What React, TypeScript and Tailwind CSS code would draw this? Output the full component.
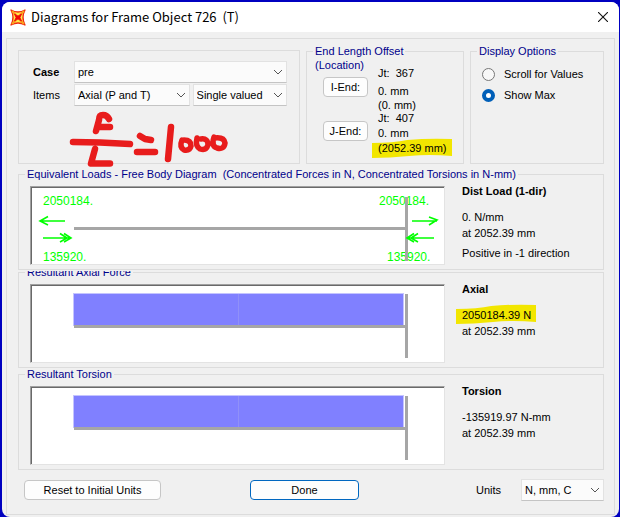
import type { ReactNode } from "react";

function Chevron() {
  return (
    <svg className="pointer-events-none absolute top-1/2 right-1 h-2 w-2.5 -translate-y-1/2" viewBox="0 0 10 8" fill="none" stroke="#555" strokeWidth="1">
      <path d="M1 2l4 4 4-4" />
    </svg>
  );
}

function Select({ id, label, options, className }: { id: string; label?: string; options: string[]; className: string }) {
  return (
    <div className={`relative h-[22px] ${className}`}>
      <select id={id} aria-label={label} className="h-full w-full appearance-none border border-[#e2e2e2] border-b-[#c4c4c4] bg-[#fbfbfb] pr-4 pl-[3px] leading-4 outline-none">
        {options.map((o) => (
          <option key={o}>{o}</option>
        ))}
      </select>
      <Chevron />
    </div>
  );
}

function Group({ title, className, legendClass = "", children }: { title: string; className: string; legendClass?: string; children: ReactNode }) {
  return (
    <fieldset className={`min-w-0 border border-[#dcdcdc] ${className}`}>
      <legend className={`px-0.5 leading-[14px] whitespace-pre text-[#00008b] ${legendClass}`}>{title}</legend>
      {children}
    </fieldset>
  );
}

function Canvas({ label, children }: { label: string; children: ReactNode }) {
  return (
    <div className="h-[79px] min-w-0 flex-1 border border-[#e3e3e3] border-t-[#a0a0a0] border-l-[#a0a0a0] bg-white">
      <svg role="img" aria-label={label} className="h-full w-full border-t border-l border-[#696969]" viewBox="0 0 412 76" preserveAspectRatio="xMinYMin meet">
        {children}
      </svg>
    </div>
  );
}

function Readings({ children }: { children: ReactNode }) {
  return <div className="-mt-[3px] w-[125px] shrink-0 leading-4">{children}</div>;
}

function Highlight({ children }: { children: ReactNode }) {
  return (
    <span className="relative inline-block">
      <svg className="absolute -top-[3px] -left-[6px] h-[20px] w-[80px]" viewBox="0 0 82 20" preserveAspectRatio="none">
        <path d="M0 5Q22 5 36 2Q58 0 82 1V18Q58 16 38 18Q18 20 0 20Z" fill="#f2e600" />
      </svg>
      <span className="relative">{children}</span>
    </span>
  );
}

function ForceDiagram({ label }: { label: string }) {
  return (
    <Canvas label={label}>
      <rect x="41" y="7" width="331" height="33" fill="#c4c4ff" />
      <rect x="42" y="8" width="329" height="32" fill="#8080ff" />
      <path d="M206.500 8v32" stroke="#9090f8" />
      <path d="M42 40.500h332" stroke="#a6a6a6" strokeWidth="3" />
      <path d="M374.500 8v64" stroke="#a6a6a6" strokeWidth="3" />
    </Canvas>
  );
}

function LoadDiagram() {
  return (
    <Canvas label="Free body diagram">
      <g fill="#00ff00" fontSize="12" className="font-['Liberation_Sans',Arial,sans-serif]">
        <text x="11" y="17">2050184.</text>
        <text x="11" y="73">135920.</text>
        <text x="347" y="17">2050184.</text>
        <text x="355" y="73">135920.</text>
      </g>
      <path d="M42 40.500h332" stroke="#a6a6a6" strokeWidth="3" />
      <path d="M374.500 9v64" stroke="#a6a6a6" strokeWidth="3" />
      <g fill="none" stroke="#00ff00" strokeWidth="1.600">
        <path d="M33 33H8M16 28.500l-8 4.500 8 4M11 50h28M28 45.500l7 4.500-7 4M32 45.500l7 4.500-7 4" />
        <path d="M380 33h25M397 29l8 3-8 5M402 50h-26M386 45.500l-7 4.500 7 4M382 45.500l-7 4.500 7 4" />
      </g>
    </Canvas>
  );
}

function AppIcon() {
  return (
    <svg className="h-[17px] w-4" viewBox="0 0 16 17">
      <path d="M1 1Q8 5 15 1Q11 8.500 15 16Q8 12 1 16Q5 8.500 1 1Z" fill="#ffe94a" stroke="#f02a12" strokeWidth="1.300" strokeLinejoin="round" />
      <path d="M2 2l4 4M14 2l-4 4M2 15l4-4M14 15l-4-4" stroke="#f9a01c" strokeWidth="2" />
      <path d="M4.500 5L8 7l3.500-2L10 8.500l1.500 3.500L8 10l-3.500 2L6 8.500Z" fill="#f00808" stroke="#f00808" strokeWidth="0.800" />
    </svg>
  );
}

function Handwriting() {
  return (
    <svg className="pointer-events-none absolute top-[60px] left-[50px] h-[56px] w-[162px]" viewBox="69 111 162 56" fill="none" stroke="#e81c1c" strokeWidth="6.500" strokeLinecap="round" strokeLinejoin="round">
      <path d="M109 119Q107 115 103 115Q99 115 99 120L96 131M98 127H110M73 142L100 142.500L130 144M95 149L91 163.500H110M140 136L145 139L151 140M137 152H155M171 127L168 159" />
      <path strokeWidth="5.500" d="M182 140Q179 147 184 150Q190 151 191 146Q191 140 184 140M197 138Q195 146 200 149Q206 151 208 145Q208 138 201 139M214 137Q211 146 217 148Q224 150 225 143Q224 137 215 138" />
    </svg>
  );
}

const button = "h-5 rounded-[4px] border border-[#c6c6c6] bg-[#fdfdfd] leading-4";

export default function App() {
  return (
    <div className="min-h-screen bg-[#0000c0] pt-0.5 pr-px pl-0.5 font-['Liberation_Sans',Arial,sans-serif] text-[11px] text-black">
      <main className="flex min-h-[515px] flex-col overflow-hidden rounded-lg bg-[#f0f0f0]">
        <header className="flex h-[30px] items-center bg-white px-2">
          <AppIcon />
          <h1 className="ml-[5px] flex-1 font-['Noto_Sans_CJK_SC','Noto_Sans',sans-serif] text-[13px] leading-5 whitespace-pre">Diagrams for Frame Object 726  (T)</h1>
          <button aria-label="Close" className="p-[3px]">
            <svg className="size-[10px]" viewBox="0 0 10 10" stroke="#111" strokeWidth="1.100">
              <path d="M0 0l10 10M10 0L0 10" />
            </svg>
          </button>
        </header>

        <div className="mx-1 mt-1.5 mb-[2px] flex-1 border border-[#dcdcdc] pr-[10px] pl-[11px]">
          <div className="mt-[5px] flex h-[120px] gap-1.5">
            <section className="relative mt-1.5 flex-1 border border-[#dcdcdc] pt-[10px] pr-3 pl-[14px]">
              <div className="flex items-center">
                <label htmlFor="case" className="w-[41px] font-bold">Case</label>
                <Select id="case" options={["pre"]} className="flex-1" />
              </div>
              <div className="mt-px flex items-center">
                <label htmlFor="items" className="w-[41px]">Items</label>
                <Select id="items" options={["Axial (P and T)"]} className="flex-[115]" />
                <Select id="valued" label="Value type" options={["Single valued"]} className="ml-[3px] flex-[94]" />
              </div>
              <Handwriting />
            </section>

            <Group title="End Length Offset" className="w-[158px] pl-1.5">
              <p className="pl-0.5 leading-[14px] text-[#00008b]">(Location)</p>
              <div className="-mt-[7px] flex gap-[10px] pl-[10px]">
                <div className="flex flex-col gap-6 pt-[12px]">
                  <button className={`${button} w-[45px]`}>I-End:</button>
                  <button className={`${button} w-[45px]`}>J-End:</button>
                </div>
                <div className="whitespace-pre">
                  <p className="leading-[16px]">Jt:  367</p>
                  <p className="pt-[3px] leading-[14px]">0. mm</p>
                  <p className="leading-[14px]">(0. mm)</p>
                  <p className="leading-[13px]">Jt:  407</p>
                  <p className="leading-[16px]">0. mm</p>
                  <p className="leading-[14px]"><Highlight>(2052.39 mm)</Highlight></p>
                </div>
              </div>
            </Group>

            <Group title="Display Options" className="w-[134px] pl-1.5">
              <div className="flex flex-col gap-[5px] pt-2 pl-[5px]">
                {["Scroll for Values", "Show Max"].map((o, i) => (
                  <label key={o} className="flex items-center gap-[9px] leading-4">
                    <input type="radio" name="display" defaultChecked={i === 1} className="size-[13px] appearance-none rounded-full border border-[#777] bg-[#f8f8f8] checked:border-4 checked:border-[#005fb8] checked:bg-white" />
                    {o}
                  </label>
                ))}
              </div>
            </Group>
          </div>

          <Group title="Equivalent Loads - Free Body Diagram  (Concentrated Forces in N, Concentrated Torsions in N-mm)" className="mt-[3px] pr-4 pb-1 pl-1.5">
            <div className="flex gap-[17px] pt-[5px] pl-[5px]">
              <LoadDiagram />
              <Readings>
                <h2 className="font-bold">Dist Load (1-dir)</h2>
                <p className="mt-[10px]">0. N/mm</p>
                <p>at 2052.39 mm</p>
                <p className="mt-1">Positive in -1 direction</p>
              </Readings>
            </div>
          </Group>

          <Group title="Resultant Axial Force" className="-mt-[5px] pr-4 pb-1 pl-1.5" legendClass="[clip-path:inset(6px_0_0_0)]">
            <div className="flex gap-[17px] pt-[5px] pl-[5px]">
              <ForceDiagram label="Resultant axial force" />
              <Readings>
                <h2 className="font-bold">Axial</h2>
                <p className="mt-[10px]"><Highlight>2050184.39 N</Highlight></p>
                <p>at 2052.39 mm</p>
              </Readings>
            </div>
          </Group>

          <Group title="Resultant Torsion" className="-mt-px pr-4 pb-1 pl-1.5">
            <div className="flex gap-[17px] pt-[5px] pl-[5px]">
              <ForceDiagram label="Resultant torsion" />
              <Readings>
                <h2 className="font-bold">Torsion</h2>
                <p className="mt-[10px]">-135919.97 N-mm</p>
                <p>at 2052.39 mm</p>
              </Readings>
            </div>
          </Group>

          <footer className="mt-[9px] flex items-center pl-1.5">
            <button className={`${button} w-[137px]`}>Reset to Initial Units</button>
            <button className="ml-[89px] h-5 w-[109px] rounded-[4px] border border-[#0067c0] bg-[#fdfdfd] leading-4">Done</button>
            <label htmlFor="units" className="mr-5 ml-auto">Units</label>
            <Select id="units" options={["N, mm, C"]} className="w-[83px]" />
          </footer>
        </div>
      </main>
    </div>
  );
}
